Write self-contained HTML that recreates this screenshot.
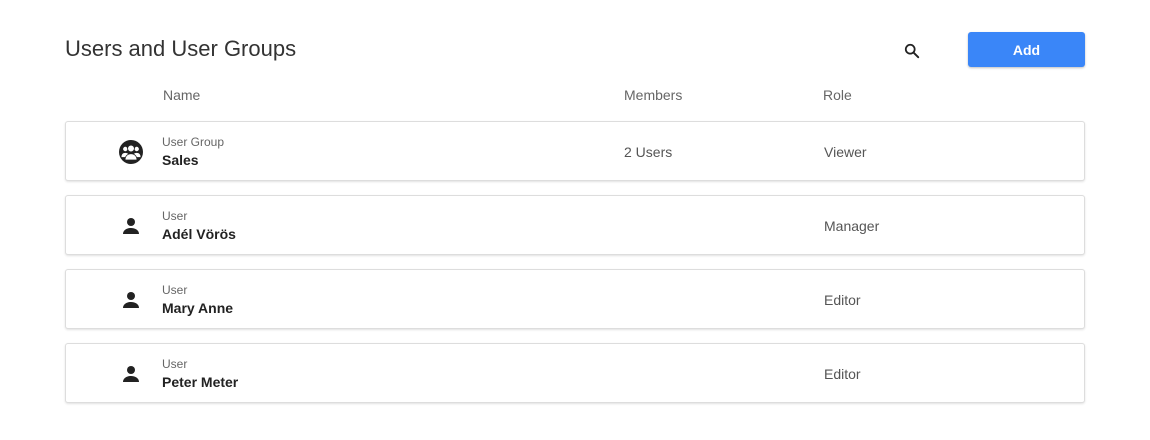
<!DOCTYPE html>
<html><head><meta charset="utf-8"><style>
*{margin:0;padding:0;box-sizing:border-box}
body{width:1150px;height:440px;background:#fff;font-family:"Liberation Sans",sans-serif;position:relative;overflow:hidden;color:#333}
.t{position:absolute;left:65px;top:36px;font-size:22px;color:#333}
.btn{position:absolute;left:968px;top:32px;width:117px;height:35px;background:#3a86f8;border-radius:3px;color:#fff;font-weight:bold;font-size:14px;text-align:center;line-height:36px;box-shadow:0 1px 2px rgba(0,0,0,.25)}
.s{position:absolute;left:904px;top:43px}
.h{position:absolute;top:87px;font-size:14px;color:#666}
.card{position:absolute;left:65px;width:1020px;height:60px;border:1px solid #ddd;border-radius:3px;box-shadow:0 1px 2px rgba(0,0,0,.12);background:#fff}
.card .ic{position:absolute;left:53px;top:18px}
.card .k{position:absolute;left:96px;top:13px;font-size:12px;color:#666}
.card .n{position:absolute;left:96px;top:30px;font-size:14px;font-weight:bold;color:#222}
.card .m{position:absolute;left:558px;top:22px;font-size:14px;color:#555}
.card .r{position:absolute;left:758px;top:22px;font-size:14px;color:#555}
</style></head><body>
<div class="t">Users and User Groups</div>
<svg class="s" width="16" height="16" viewBox="0 0 18 18"><circle cx="7" cy="7" r="5" fill="none" stroke="#222" stroke-width="2"/><path d="M11 11l5 5" stroke="#222" stroke-width="2.2" stroke-linecap="round"/></svg>
<div class="btn">Add</div>
<div class="h" style="left:163px">Name</div>
<div class="h" style="left:624px">Members</div>
<div class="h" style="left:823px">Role</div>

<div class="card" style="top:121px">
<svg class="ic" width="24" height="24" viewBox="0 0 24 24"><circle cx="12" cy="12" r="12" fill="#222"/><g fill="#fff" stroke="#222" stroke-width="0.8"><circle cx="6.3" cy="9" r="2.6"/><circle cx="17.7" cy="9" r="2.6"/><path d="M2 17.5c0-3.5 2-5 4.3-5s4.3 1.5 4.3 5zM13.4 17.5c0-3.5 2-5 4.3-5s4.3 1.5 4.3 5z"/><circle cx="12" cy="8.5" r="3.4"/><path d="M6 20c0-4 2.7-6.3 6-6.3s6 2.3 6 6.3z"/></g></svg>
<div class="k">User Group</div><div class="n">Sales</div><div class="m">2 Users</div><div class="r">Viewer</div></div>

<div class="card" style="top:195px">
<svg class="ic" width="24" height="24" viewBox="0 0 24 24"><circle cx="12" cy="8" r="4" fill="#222"/><path d="M4 20c0-4 4-6 8-6s8 2 8 6z" fill="#222"/></svg>
<div class="k">User</div><div class="n">Adél Vörös</div><div class="r">Manager</div></div>

<div class="card" style="top:269px">
<svg class="ic" width="24" height="24" viewBox="0 0 24 24"><circle cx="12" cy="8" r="4" fill="#222"/><path d="M4 20c0-4 4-6 8-6s8 2 8 6z" fill="#222"/></svg>
<div class="k">User</div><div class="n">Mary Anne</div><div class="r">Editor</div></div>

<div class="card" style="top:343px">
<svg class="ic" width="24" height="24" viewBox="0 0 24 24"><circle cx="12" cy="8" r="4" fill="#222"/><path d="M4 20c0-4 4-6 8-6s8 2 8 6z" fill="#222"/></svg>
<div class="k">User</div><div class="n">Peter Meter</div><div class="r">Editor</div></div>
</body></html>
